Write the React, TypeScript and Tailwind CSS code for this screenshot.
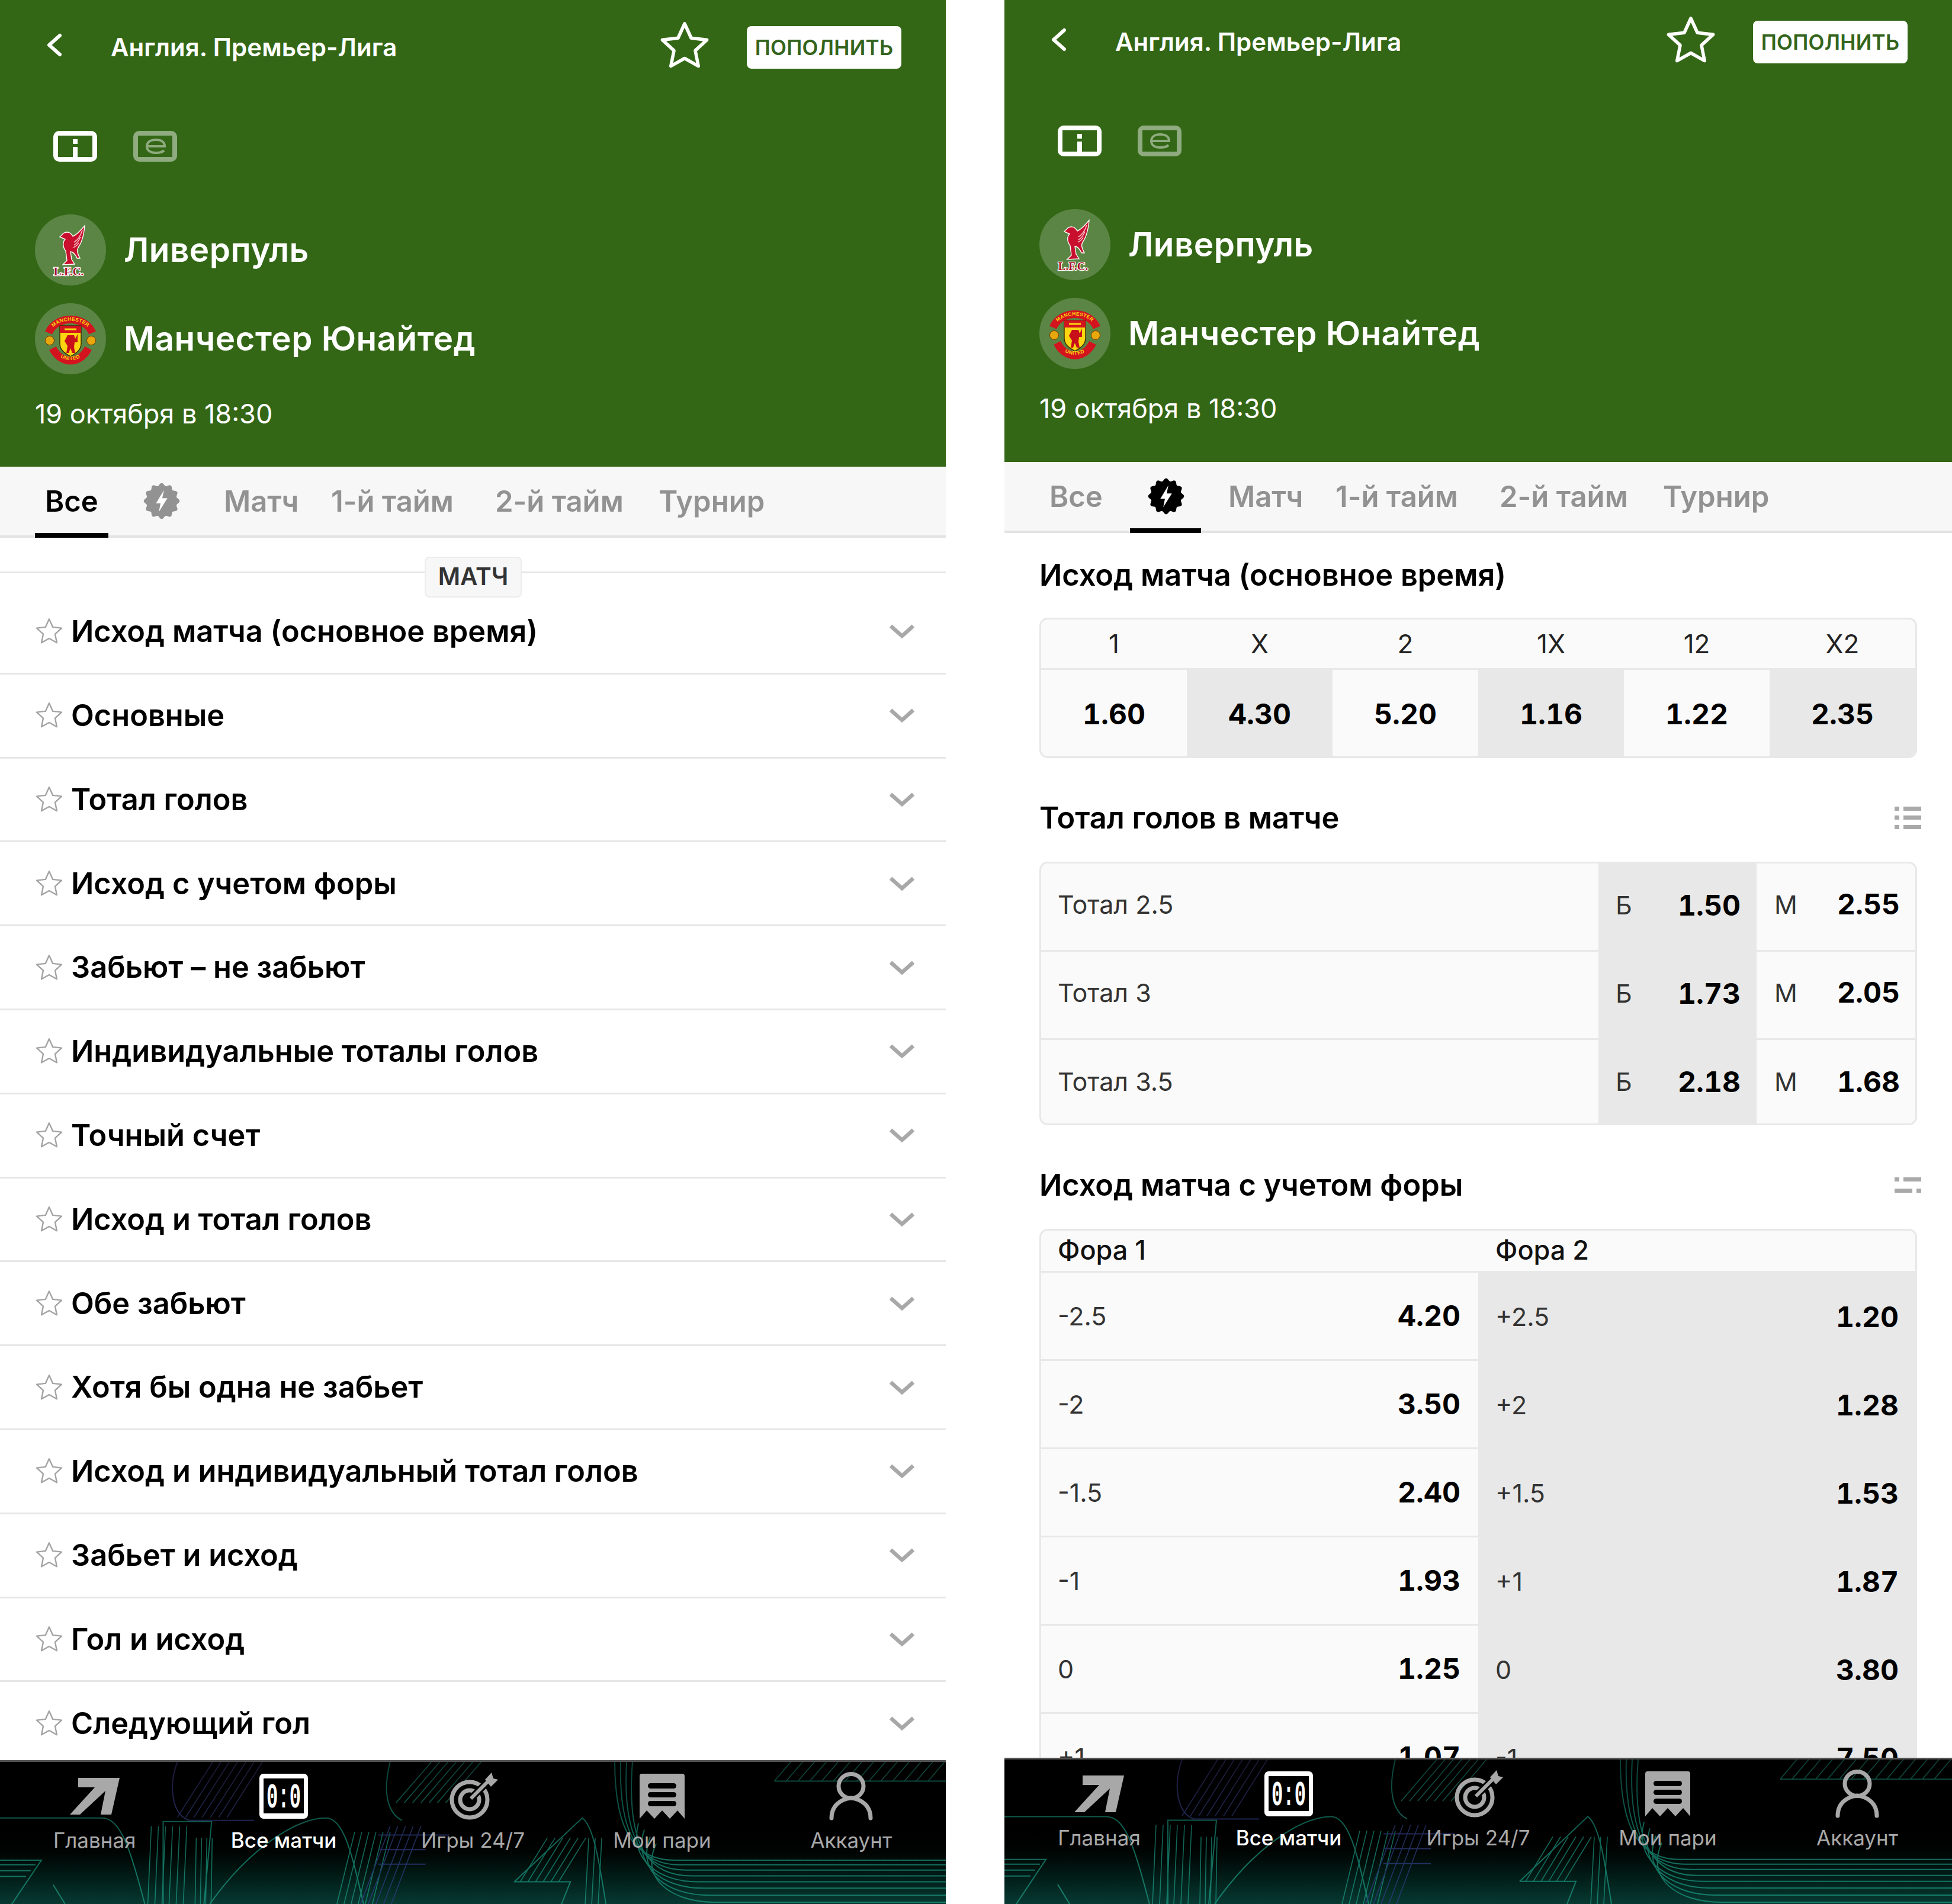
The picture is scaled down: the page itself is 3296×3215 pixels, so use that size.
import type { ReactNode } from 'react'

const MARKETS = [
  'Исход матча (основное время)',
  'Основные',
  'Тотал голов',
  'Исход с учетом форы',
  'Забьют – не забьют',
  'Индивидуальные тоталы голов',
  'Точный счет',
  'Исход и тотал голов',
  'Обе забьют',
  'Хотя бы одна не забьет',
  'Исход и индивидуальный тотал голов',
  'Забьет и исход',
  'Гол и исход',
  'Следующий гол',
]

const OUTCOMES = [
  ['1', '1.60'],
  ['X', '4.30'],
  ['2', '5.20'],
  ['1X', '1.16'],
  ['12', '1.22'],
  ['X2', '2.35'],
]

const TOTALS = [
  ['Тотал 2.5', '1.50', '2.55'],
  ['Тотал 3', '1.73', '2.05'],
  ['Тотал 3.5', '2.18', '1.68'],
]

const HANDICAPS = [
  ['-2.5', '4.20', '+2.5', '1.20'],
  ['-2', '3.50', '+2', '1.28'],
  ['-1.5', '2.40', '+1.5', '1.53'],
  ['-1', '1.93', '+1', '1.87'],
  ['0', '1.25', '0', '3.80'],
  ['+1', '1.07', '-1', '7.50'],
]

const STAR = '50,7 62.9,35.2 93.7,38.8 70.9,59.8 77,90.2 50,75 23,90.2 29.1,59.8 6.3,38.8 37.1,35.2'

function Star({ className, width }: { className: string; width: number }) {
  return (
    <svg viewBox="0 0 100 100" className={className} fill="none" stroke="currentColor" strokeWidth={width} strokeLinejoin="round">
      <polygon points={STAR} />
    </svg>
  )
}

// scalloped badge outline
const scallop = Array.from({ length: 96 }, (_, i) => {
  const a = (i / 96) * Math.PI * 2
  const r = 29 + 2.4 * Math.cos(a * 12)
  return `${(32 + r * Math.sin(a)).toFixed(1)},${(32 - r * Math.cos(a)).toFixed(1)}`
}).join(' ')

function LiveBadge({ active }: { active: boolean }) {
  return (
    <svg viewBox="0 0 64 64" className={active ? 'w-[62px] h-[62px] text-black' : 'w-[62px] h-[62px] text-[#929292]'}>
      <polygon points={scallop} fill="currentColor" />
      <polygon points="36,13 22,36 30,36 27,51 42,27 33,27" fill="#fff" />
    </svg>
  )
}

function LiverpoolCrest() {
  return (
    <svg viewBox="0 0 120 120" className="w-[120px] h-[120px]">
      <path
        d="M84 19C83 30 81 45 73 56C70 61 72 66 76 74L71 74C68 67 64 63 60 63L62 76L67 84L47 85L54 78L52 62C46 54 47 46 51 42L42 38L48 32C54 28 60 30 64 37C72 34 78 26 84 19Z"
        fill="#c8102e"
        stroke="#fff"
        strokeWidth="1.4"
      />
      <path d="M80 27C77 36 73 43 66 47M77 38C74 45 71 49 66 52M74 48C72 52 69 54 65 56" stroke="#f7c6cc" strokeWidth="1.5" fill="none" />
      <text x="57" y="103" textAnchor="middle" fontSize="19" fontWeight="700" fill="#a80f26" stroke="#fff" strokeWidth="2.6" paintOrder="stroke" className="font-['Liberation_Serif']">
        L.F.C.
      </text>
    </svg>
  )
}

function UnitedCrest() {
  return (
    <svg viewBox="0 0 120 120" className="w-[120px] h-[120px]">
      <defs>
        <path id="mu-top" d="M26 47C38 24 82 24 94 47" />
        <path id="mu-bottom" d="M32 81C44 101 76 101 88 81" />
      </defs>
      <path d="M23 50C36 20 84 20 97 50" fill="none" stroke="#d3141e" strokeWidth="13" />
      <path d="M30 76C44 104 76 104 90 76" fill="none" stroke="#d3141e" strokeWidth="13" />
      <circle cx="25" cy="63" r="7.5" fill="#e8a80c" stroke="#7a3b00" strokeWidth="1" />
      <circle cx="95" cy="63" r="7.5" fill="#e8a80c" stroke="#7a3b00" strokeWidth="1" />
      <path d="M42 38H78V68C78 80 68 85 60 90C52 85 42 80 42 68Z" fill="#fbd50f" stroke="#3a2a00" strokeWidth="1.4" />
      <path d="M42 38H78V50H42Z" fill="#d3141e" />
      <path d="M50 44H70" stroke="#fbd50f" strokeWidth="3" />
      <path d="M55 54H66L68 60L72 52V66H67L66 74L68 84H63L60 76L57 84H53L55 72L50 64Z" fill="#c8101a" />
      <text fontSize="8.5" fontWeight="700" fill="#fbd50f" letterSpacing="0.3" className="font-['Liberation_Sans']">
        <textPath href="#mu-top" startOffset="50%" textAnchor="middle">MANCHESTER</textPath>
      </text>
      <text fontSize="8.5" fontWeight="700" fill="#fbd50f" letterSpacing="0.6" className="font-['Liberation_Sans']">
        <textPath href="#mu-bottom" startOffset="50%" textAnchor="middle">UNITED</textPath>
      </text>
    </svg>
  )
}

function TeamRow({ name, children }: { name: string; children: ReactNode }) {
  return (
    <div className="flex items-center h-[120px]">
      <div className="w-[120px] h-[120px] rounded-full bg-white/20 shrink-0">{children}</div>
      <span className="ml-[30px] text-[56.5px] leading-none font-semibold text-white tracking-[0.5px]">{name}</span>
    </div>
  )
}

function Header({ top, height }: { top: string; height: string }) {
  return (
    <header className={`${top} ${height} bg-[#336716] shrink-0`}>
      <div className="flex items-center h-[72px] pl-[78px] pr-[75px]">
        <svg viewBox="0 0 27 40" className="w-[27px] h-[40px] -mt-[8px]" fill="none" stroke="#fff" strokeWidth="6" strokeLinecap="round" strokeLinejoin="round">
          <path d="M23 4L5 20L23 36" />
        </svg>
        <span className="ml-[82px] text-[42px] leading-none font-semibold text-white">Англия. Премьер-Лига</span>
        <Star className="ml-auto w-[86px] h-[86px] text-white -mt-[6px]" width={6.5} />
        <div className="ml-[62px] w-[261px] h-[72px] rounded-[8px] bg-white flex items-center justify-center text-[35px] font-semibold text-[#33641c] tracking-[0.3px]">
          ПОПОЛНИТЬ
        </div>
      </div>
      <div className="flex items-center gap-[61px] mt-[105px] pl-[90px]">
        <svg viewBox="0 0 74 52" className="w-[74px] h-[52px]">
          <path fillRule="evenodd" d="M10 0H64A10 10 0 0 1 74 10V42A10 10 0 0 1 64 52H10A10 10 0 0 1 0 42V10A10 10 0 0 1 10 0ZM8 8V44H33V27H41V44H66V8ZM33 14H41V22H33Z" fill="#fff" />
        </svg>
        <svg viewBox="0 0 74 52" className="w-[74px] h-[52px] opacity-45">
          <path fillRule="evenodd" d="M10 0H64A10 10 0 0 1 74 10V42A10 10 0 0 1 64 52H10A10 10 0 0 1 0 42V10A10 10 0 0 1 10 0ZM8 8V44H66V8Z" fill="#fff" />
          <path d="M24 26H53C53 18 46 15 38 15C29 15 23 19 23 26C23 33 29 37 38 37C44 37 49 36 52 33" fill="none" stroke="#fff" strokeWidth="4" />
        </svg>
      </div>
      <div className="flex flex-col gap-[30px] mt-[89px] pl-[59px]">
        <TeamRow name="Ливерпуль"><LiverpoolCrest /></TeamRow>
        <TeamRow name="Манчестер Юнайтед"><UnitedCrest /></TeamRow>
      </div>
      <p className="mt-[40px] pl-[59px] text-[45px] leading-[54px] text-white">19 октября в 18:30</p>
    </header>
  )
}

function Tabs({ live }: { live: boolean }) {
  const tab = 'text-[49px] font-semibold text-[#929292] leading-none'
  return (
    <nav className="relative flex items-center h-[120px] shrink-0 bg-[#f7f7f7] border-b-[4px] border-[#e3e3e3] pl-[76px]">
      <span className={live ? `${tab} w-[166px]` : 'w-[166px] text-[49px] font-semibold text-black leading-none'}>Все</span>
      <span className="w-[136px]"><LiveBadge active={live} /></span>
      <span className={`${tab} w-[181px]`}>Матч</span>
      <span className={`${tab} w-[277px]`}>1-й тайм</span>
      <span className={`${tab} w-[276px]`}>2-й тайм</span>
      <span className={tab}>Турнир</span>
      <span className={live ? 'absolute left-[212px] -bottom-[4px] w-[120px] h-[8px] bg-black' : 'absolute left-[59px] -bottom-[4px] w-[124px] h-[8px] bg-black'} />
    </nav>
  )
}

function MarketRow({ name }: { name: string }) {
  return (
    <div className="flex items-center h-[141.8px] border-b-[3px] border-[#e6e6e6] pl-[59px] pr-[52px]">
      <Star className="w-[48px] h-[48px] text-[#a3a3a3]" width={5} />
      <span className="ml-[13px] text-[50.5px] leading-none font-semibold text-black">{name}</span>
      <svg viewBox="0 0 44 26" className="ml-auto w-[44px] h-[26px]" fill="none" stroke="#a8a8a8" strokeWidth="6.5">
        <path d="M3 4L22 21L41 4" />
      </svg>
    </div>
  )
}

function MarketList() {
  return (
    <div className="flex-1 overflow-hidden">
      <div className="relative mt-[57px] pt-[29px] border-t-[3px] border-[#e6e6e6]">
        <div className="absolute left-[717px] -top-[28px] w-[164px] h-[69px] rounded-[8px] bg-[#f7f7f7] border-[2px] border-[#ececec] flex items-center justify-center text-[40.5px] font-semibold text-[#333]">
          МАТЧ
        </div>
        {MARKETS.map((m) => <MarketRow key={m} name={m} />)}
      </div>
    </div>
  )
}

function SectionTitle({ title, className, icon }: { title: string; className: string; icon?: ReactNode }) {
  return (
    <div className={`flex items-center justify-between h-[60px] pl-[59px] pr-[52px] ${className}`}>
      <h2 className="text-[50.5px] leading-none font-semibold text-black">{title}</h2>
      {icon}
    </div>
  )
}

function ListIcon() {
  return (
    <svg viewBox="0 0 45 38" className="w-[45px] h-[38px]" fill="#a9a9a9">
      <rect y="0" width="8" height="7" /><rect x="15" y="0" width="30" height="7" />
      <rect y="15" width="8" height="7" /><rect x="15" y="15" width="30" height="7" />
      <rect y="31" width="8" height="7" /><rect x="15" y="31" width="30" height="7" />
    </svg>
  )
}

function SplitIcon() {
  return (
    <svg viewBox="0 0 45 26" className="w-[45px] h-[26px]" fill="#a9a9a9">
      <rect y="0" width="8" height="7" /><rect x="15" y="0" width="30" height="7" />
      <rect y="19" width="30" height="7" /><rect x="37" y="19" width="8" height="7" />
    </svg>
  )
}

function Detail() {
  const box = 'ml-[59px] w-[1482px] rounded-[14px] border-[3px] border-[#e8e8e8] bg-[#fafafa] overflow-hidden'
  const label = 'text-[43px] leading-none text-[#333]'
  const odd = 'text-[48px] leading-none font-bold text-black tabular-nums'
  return (
    <div className="flex-1 overflow-hidden">
      <SectionTitle title="Исход матча (основное время)" className="mt-[41px] mb-[42px]" />
      <div className={`${box} grid grid-cols-6`}>
        {OUTCOMES.map(([k]) => (
          <div key={k} className="h-[85px] flex items-center justify-center border-b-[3px] border-[#e8e8e8] text-[44px] leading-none text-[#222]">{k}</div>
        ))}
        {OUTCOMES.map(([k, v], i) => (
          <div key={k} className={i % 2 ? `h-[146px] pt-[3px] flex items-center justify-center bg-[#e8e8e8] ${odd}` : `h-[146px] pt-[3px] flex items-center justify-center ${odd}`}>{v}</div>
        ))}
      </div>

      <SectionTitle title="Тотал голов в матче" className="mt-[71px] mb-[44px]" icon={<ListIcon />} />
      <div className={box}>
        {TOTALS.map(([name, over, under]) => (
          <div key={name} className="flex h-[149px] last:h-[141px] group">
            <div className={`flex-1 flex items-center pl-[28px] pb-[8px] group-last:pb-0 border-b-[3px] group-last:border-b-0 border-[#e8e8e8] ${label}`}>{name}</div>
            <div className="w-[267px] bg-[#e8e8e8] flex items-center justify-between pl-[29px] pr-[27px] pb-[8px] group-last:pb-0">
              <span className={label}>Б</span>
              <span className={odd}>{over}</span>
            </div>
            <div className="w-[268px] flex items-center justify-between pl-[30px] pr-[26px] pb-[8px] group-last:pb-0 border-b-[3px] group-last:border-b-0 border-[#e8e8e8]">
              <span className={label}>М</span>
              <span className={odd}>{under}</span>
            </div>
          </div>
        ))}
      </div>

      <SectionTitle title="Исход матча с учетом форы" className="mt-[71px] mb-[44px]" icon={<SplitIcon />} />
      <div className={box}>
        <div className="flex h-[71px] pb-[3px] items-center border-b-[3px] border-[#e8e8e8]">
          <span className="w-[738px] pl-[28px] text-[45px] leading-none font-medium text-[#111]">Фора 1</span>
          <span className="pl-[29px] text-[45px] leading-none font-medium text-[#111]">Фора 2</span>
        </div>
        {HANDICAPS.map(([a, av, b, bv]) => (
          <div key={a} className="flex h-[149px]">
            <div className="w-[738px] flex items-center justify-between pl-[28px] pr-[30px] border-b-[3px] border-[#e8e8e8]">
              <span className={label}>{a}</span>
              <span className={odd}>{av}</span>
            </div>
            <div className="flex-1 flex items-center justify-between bg-[#e8e8e8] pl-[29px] pr-[28px]">
              <span className={label}>{b}</span>
              <span className={odd}>{bv}</span>
            </div>
          </div>
        ))}
      </div>
    </div>
  )
}

// hatch lines inside a slanted band, used by the nav background
function hatch(x: number, y0: number, y1: number, dx: number, count: number, step: number) {
  let d = ''
  for (let i = 0; i < count; i++) {
    d += `M${x + i * step} ${y1}L${x + i * step + dx} ${y0}`
  }
  return d
}

const HATCH_TEAL = [
  hatch(1310, 0, 33, 28, 14, 20),
  hatch(670, 0, 70, 60, 7, 14),
  hatch(250, 110, 243, 6, 6, 12),
  hatch(570, 120, 243, 30, 6, 12),
  hatch(880, 130, 205, 46, 6, 13),
  hatch(330, 130, 243, 2, 4, 9),
  hatch(990, 130, 243, 6, 3, 11),
].join('')

const HATCH_PURPLE = [hatch(300, 0, 95, 60, 7, 14), hatch(610, 110, 243, 50, 5, 13)].join('')

const STEPS = [168, 176, 185, 195, 205, 216, 228, 240]

function NavPattern({ id }: { id: string }) {
  return (
    <svg viewBox="0 0 1600 243" preserveAspectRatio="none" className="absolute inset-0 w-full h-full" fill="none">
      <defs>
        <linearGradient id={`${id}-teal`} gradientUnits="userSpaceOnUse" x1="0" y1="0" x2="0" y2="243">
          <stop offset="0" stopColor="#0b3f36" />
          <stop offset="1" stopColor="#15806c" />
        </linearGradient>
        <linearGradient id={`${id}-blue`} gradientUnits="userSpaceOnUse" x1="0" y1="0" x2="0" y2="243">
          <stop offset="0" stopColor="#1d1838" />
          <stop offset="1" stopColor="#243a72" />
        </linearGradient>
      </defs>
      <g stroke={`url(#${id}-teal)`} strokeWidth="2">
        <path d="M0 96H172C205 96 220 150 245 243" />
        <path d="M276 243L276 102H358L345 243" />
        <path d="M355 243C420 150 500 96 552 96C585 96 600 180 615 243" />
        <path d="M1310 33H1600" />
        <path d="M870 205L985 96C1005 110 1015 180 1025 243M870 205H965L950 243" />
        <path d="M660 0C645 60 660 90 680 100" />
        <path d="M0 168H70L20 243" />
        <path d="M0 176H60M0 186H52M0 196H44" />
        <path d="M110 243L90 210" />
        {STEPS.map((y, i) => (
          <path key={y} d={`M${1040 + i * 10} ${i < 4 ? 0 : y - 100}C${1040 + i * 6} ${y - 40} ${1080 + i * 8} ${y} ${1140 + i * 10} ${y}H1600`} />
        ))}
      </g>
      <path d={HATCH_TEAL} stroke={`url(#${id}-teal)`} strokeWidth="1.6" />
      <path d={HATCH_PURPLE} stroke={`url(#${id}-blue)`} strokeWidth="1.6" />
      <path d="M300 0C285 40 290 90 320 100H430M640 125H760M640 150H720M640 175H720" stroke={`url(#${id}-blue)`} strokeWidth="2" />
    </svg>
  )
}

function NavItem({ label, active, children }: { label: string; active?: boolean; children: ReactNode }) {
  return (
    <div className="flex-1 flex flex-col items-center">
      <div className="h-[84px] flex items-center justify-center">{children}</div>
      <span className={active ? 'mt-[10px] text-[35px] leading-[44px] font-medium text-white' : 'mt-[10px] text-[35px] leading-[44px] text-[#a8a8a8]'}>{label}</span>
    </div>
  )
}

function BottomNav({ height, id }: { height: string; id: string }) {
  return (
    <footer className={`relative ${height} shrink-0 border-t-[3px] border-[#555] bg-linear-to-b from-black from-45% to-[#073a32] overflow-hidden`}>
      <NavPattern id={id} />
      <div className="relative flex pt-[16px]">
        <NavItem label="Главная">
          <svg viewBox="0 0 84 62" className="w-[84px] h-[62px]" fill="#a8a8a8">
            <path d="M14 0H84L70 62H52L60 22L17 62H0L42 16H14Z" />
          </svg>
        </NavItem>
        <NavItem label="Все матчи" active>
          <svg viewBox="0 0 82 76" className="w-[82px] h-[76px]">
            <rect width="82" height="76" rx="7" fill="#fff" />
            <rect x="7" y="8" width="68" height="59" fill="#000" />
            <text x="41" y="57" textAnchor="middle" fontSize="60" fontWeight="700" fill="#fff" textLength="58" lengthAdjust="spacingAndGlyphs" className="font-['Liberation_Mono',monospace]">0:0</text>
          </svg>
        </NavItem>
        <NavItem label="Игры 24/7">
          <svg viewBox="0 0 84 80" className="w-[84px] h-[80px]" fill="none" stroke="#a8a8a8">
            <circle cx="36" cy="46" r="30" strokeWidth="7" />
            <circle cx="36" cy="46" r="16" strokeWidth="7" />
            <path d="M38 44L72 10" strokeWidth="12" stroke="#000" />
            <path d="M38 44L70 12" strokeWidth="6" />
            <path d="M62 12L73 0L76 10L84 12L72 24Z" fill="#a8a8a8" stroke="none" />
          </svg>
        </NavItem>
        <NavItem label="Мои пари">
          <svg viewBox="0 0 76 76" className="w-[76px] h-[76px]">
            <path d="M4 0H72A4 4 0 0 1 76 4V76L64 62L51 76L38 62L25 76L12 62L0 76V4A4 4 0 0 1 4 0Z" fill="#a8a8a8" />
            <rect x="14" y="16" width="48" height="9" rx="4.5" fill="#000" />
            <rect x="14" y="31" width="48" height="9" rx="4.5" fill="#000" />
            <rect x="14" y="46" width="48" height="9" rx="4.5" fill="#000" />
          </svg>
        </NavItem>
        <NavItem label="Аккаунт">
          <svg viewBox="0 0 74 82" className="w-[74px] h-[82px]" fill="none" stroke="#a8a8a8" strokeWidth="7" strokeLinecap="round">
            <ellipse cx="37" cy="24" rx="21" ry="20.5" />
            <path d="M4 78C4 58 18 46 37 44C56 46 70 58 70 78" />
          </svg>
        </NavItem>
      </div>
    </footer>
  )
}

export default function App() {
  return (
    <div className="flex justify-between w-[3296px] h-[3215px] bg-white overflow-hidden font-['Inter','Noto_Sans',sans-serif]">
      <section className="flex flex-col w-[1597px] h-full">
        <Header top="pt-[44px]" height="h-[788px]" />
        <Tabs live={false} />
        <MarketList />
        <BottomNav height="h-[243px]" id="nav-left" />
      </section>
      <section className="flex flex-col w-[1600px] h-full">
        <Header top="pt-[35px]" height="h-[780px]" />
        <Tabs live />
        <Detail />
        <BottomNav height="h-[247px]" id="nav-right" />
      </section>
    </div>
  )
}
